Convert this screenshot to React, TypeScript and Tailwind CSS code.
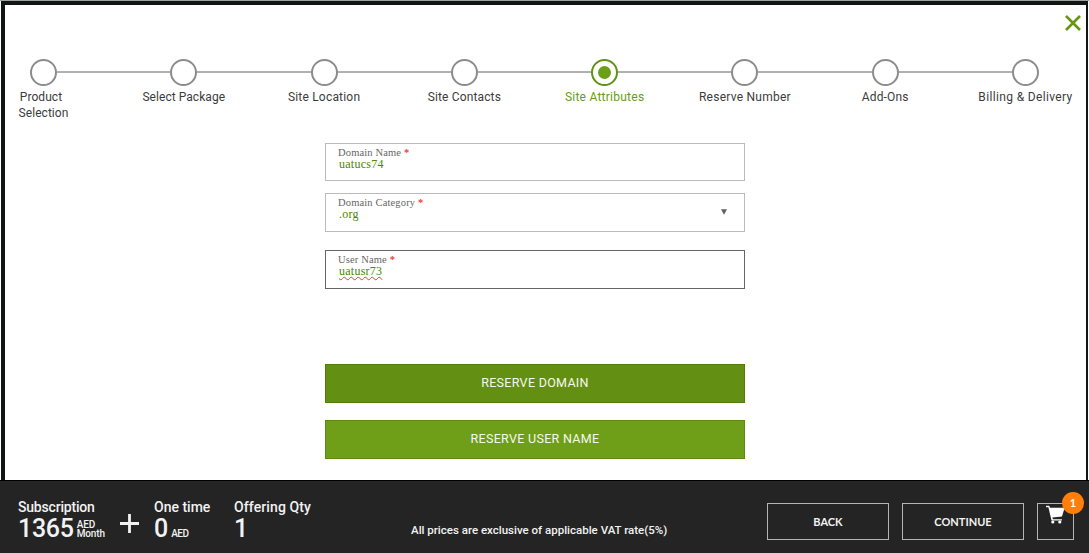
import { Fragment } from "react";

type Step = { lines: string[]; className: string; active?: boolean };

const steps: Step[] = [
  { lines: ["Product", "Selection"], className: "tracking-[0.05px]" },
  { lines: ["Select Package"], className: "tracking-[0.05px]" },
  { lines: ["Site Location"], className: "tracking-[0.2px]" },
  { lines: ["Site Contacts"], className: "tracking-[0.15px]" },
  { lines: ["Site Attributes"], className: "tracking-[0.25px]", active: true },
  { lines: ["Reserve Number"], className: "tracking-[0.25px]" },
  { lines: ["Add-Ons"], className: "tracking-[0.15px]" },
  { lines: ["Billing & Delivery"], className: "tracking-[0.35px]" },
];

function Stepper() {
  return (
    <div className="mt-[54px] ml-[25px] flex w-[1009px] items-start">
      {steps.map((s, i) => (
        <Fragment key={s.lines[0]}>
          {i > 0 && <div className="mt-[12px] h-[2px] flex-1 bg-[#b0b0b0]" />}
          <div className="flex w-[27px] shrink-0 flex-col items-center">
            <div
              className={
                s.active
                  ? "flex size-[27px] items-center justify-center rounded-full border-2 border-[#5f9312]"
                  : "size-[27px] rounded-full border-2 border-[#8c8c8c]"
              }
            >
              {s.active && <div className="size-[13px] rounded-full bg-[#6b9f17]" />}
            </div>
            <div
              className={`mt-[3px] text-center text-[12px] leading-[16px] whitespace-nowrap ${s.active ? "text-[#659c1b]" : "text-[#3c3c3c]"} ${s.className}`}
            >
              {s.lines.map((l) => (
                <div key={l} className={l === "Product" ? "pr-[5px]" : ""}>
                  {l}
                </div>
              ))}
            </div>
          </div>
        </Fragment>
      ))}
    </div>
  );
}

function Field({ label, value, className, valueClass = "", arrow }: { label: string; value: string; className: string; valueClass?: string; arrow?: boolean }) {
  return (
    <div className={`flex w-[420px] justify-between border pl-[12px] font-['Liberation_Serif',serif] ${className}`}>
      <div className="pt-[3px]">
        <div className="text-[10.5px] leading-[11px] tracking-[0.15px] text-[#666]">
          {label} <span className="font-bold text-[#f04040]">*</span>
        </div>
        <div className={`ml-px w-fit text-[12px] leading-[12px] tracking-[0.25px] text-[#4a8600] ${valueClass}`}>{value}</div>
      </div>
      {arrow && (
        <svg className="mt-[15px] mr-[17px]" width="6" height="6" viewBox="0 0 6 6">
          <path d="M0 .3h6L3 5.8z" fill="#606060" />
        </svg>
      )}
    </div>
  );
}

function Footer() {
  return (
    <footer className="flex h-[73px] border-t border-black bg-[#242424] pl-[18px] text-[#f2f2f2]">
      <div className="mt-[18px] w-[102px] shrink-0">
        <div className="text-[14px] leading-[17px] font-medium tracking-[-0.2px]">Subscription</div>
        <div className="flex">
          <span className="text-[25px] leading-[25px] font-medium tracking-[-0.3px]">1365</span>
          <span className="mt-[4px] ml-[3px] text-[10px] leading-[9px] font-medium tracking-[-0.1px]">
            AED
            <br />
            Month
          </span>
        </div>
      </div>
      <svg className="mt-[33px] shrink-0" width="19" height="19" viewBox="0 0 19 19">
        <path d="M9.5 0v19M0 9.5h19" stroke="#f2f2f2" strokeWidth="2.8" />
      </svg>
      <div className="mt-[18px] ml-[15px] w-[80px] shrink-0">
        <div className="text-[14px] leading-[17px] font-medium">One time</div>
        <div className="flex">
          <span className="text-[25px] leading-[25px] font-medium">0</span>
          <span className="mt-[12px] ml-[3px] text-[10px] leading-[11px] font-medium tracking-[-0.5px]">AED</span>
        </div>
      </div>
      <div className="mt-[18px] w-[177px] shrink-0">
        <div className="text-[14px] leading-[17px] font-medium tracking-[0.1px]">Offering Qty</div>
        <div className="text-[25px] leading-[25px] font-medium">1</div>
      </div>
      <div className="mt-[42px] w-[356px] shrink-0 text-[11.5px] leading-[14px] font-medium whitespace-nowrap">
        All prices are exclusive of applicable VAT rate(5%)
      </div>
      <div className="mt-[22px] flex gap-[13px] font-['Lato',sans-serif] text-[11px] font-bold">
        <button className="h-[37px] w-[122px] border border-[#b5b5b5] pt-px">BACK</button>
        <button className="h-[37px] w-[122px] border border-[#b5b5b5] pt-px">CONTINUE</button>
        <button className="relative flex h-[37px] w-[37px] justify-center border border-[#b5b5b5]">
          <svg className="mt-[1px] mr-[1px]" width="19" height="19" viewBox="0 0 19 19">
            <path d="M0 .8h3.2l.8 2H18.6L16 11.6l-9.6.9.5 1.7h9v1.3H5.5L2.4 2.3H0z" fill="#fff" />
            <circle cx="6.8" cy="17" r="1.6" fill="#fff" />
            <circle cx="13.8" cy="17" r="1.6" fill="#fff" />
          </svg>
          <span className="absolute -top-[12px] -right-[11px] flex size-[22px] items-center justify-center rounded-full bg-[#ff7f0a] text-[11px] text-white">
            1
          </span>
        </button>
      </div>
    </footer>
  );
}

export default function App() {
  return (
    <div className="h-[553px] w-[1089px] overflow-hidden bg-white font-['Roboto',sans-serif]">
      <div className="h-px bg-[#9da5a0]" />
      <div className="mr-[1px] ml-px flex h-[479px] flex-col border-t-4 border-r-[2px] border-l-[4px] border-[#111614]">
        <div className="flex h-0 justify-end">
          <button className="mt-[10px] mr-[5px] size-[16px]">
            <svg width="16" height="16" viewBox="0 0 16 16">
              <path d="M1 1l14 14M15 1L1 15" stroke="#649714" strokeWidth="2.6" />
            </svg>
          </button>
        </div>
        <Stepper />
        <div className="mt-[22px] ml-[320px] flex flex-col">
          <Field label="Domain Name" value="uatucs74" className="h-[38px] border-[#bbb]" />
          <Field label="Domain Category" value=".org" className="mt-[12px] h-[39px] border-[#bbb]" arrow />
          <Field
            label="User Name"
            value="uatusr73"
            className="mt-[18px] h-[39px] border-[#666]"
            valueClass="underline decoration-[#e04040] decoration-wavy decoration-[0.8px] underline-offset-[1px]"
          />
          <button className="mt-[75px] h-[39px] w-[420px] border border-[#527c10] bg-[#638f13] text-[12.5px] tracking-[0.3px] text-[#f5f8ee]">
            RESERVE DOMAIN
          </button>
          <button className="mt-[17px] h-[39px] w-[420px] border border-[#5b8912] bg-[#6f9f18] text-[12.5px] tracking-[0.3px] text-[#f5f8ee]">
            RESERVE USER NAME
          </button>
        </div>
      </div>
      <Footer />
    </div>
  );
}
